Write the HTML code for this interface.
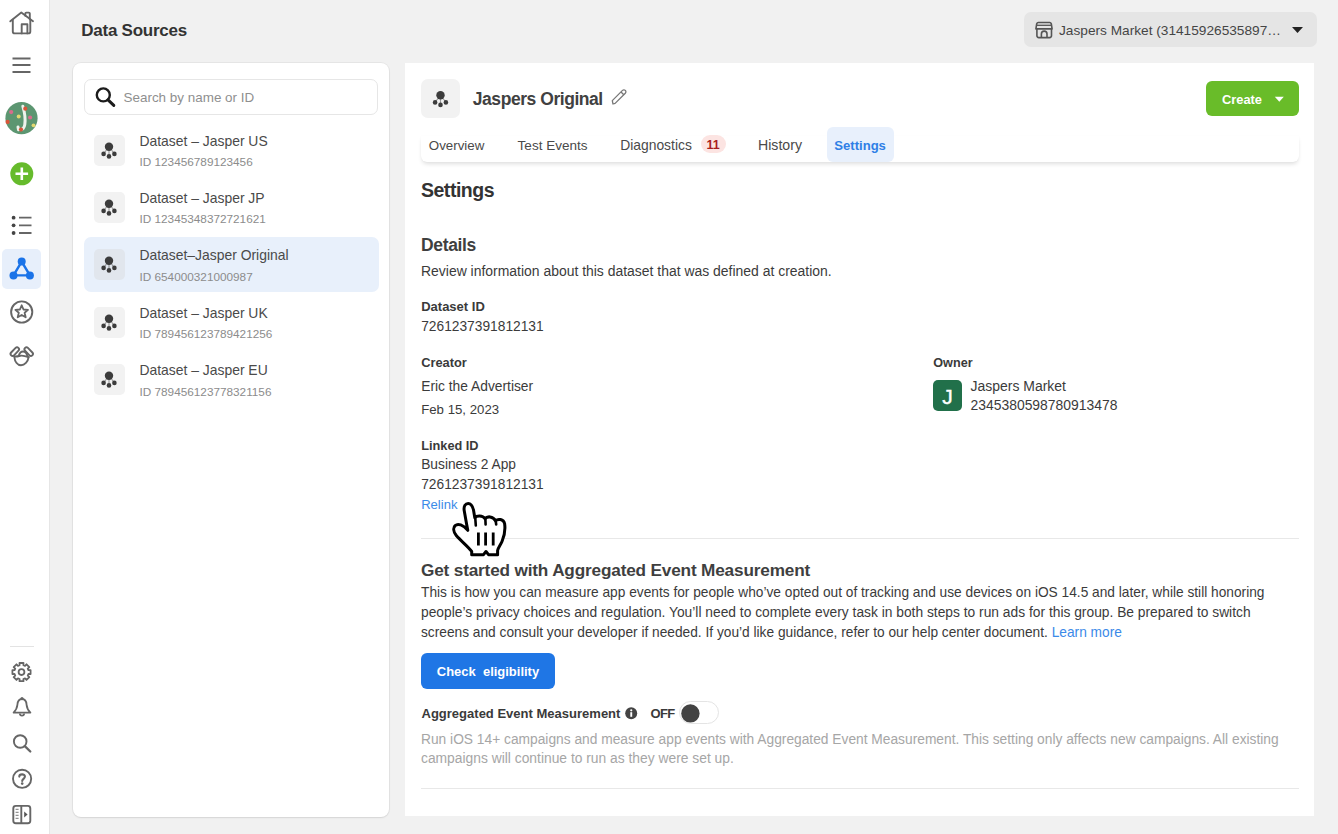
<!DOCTYPE html>
<html><head><meta charset="utf-8"><style>
html,body{margin:0;padding:0;}
body{width:1338px;height:834px;overflow:hidden;position:relative;background:#f1f1f1;font-family:"Liberation Sans",sans-serif;}
#w{position:absolute;left:0;top:0;width:1338px;height:834px;}
.t{position:absolute;white-space:pre;line-height:1;}
.r{position:absolute;}
svg.r{overflow:visible;}
</style></head><body><div id="w">
<div class="r" style="left:0px;top:0px;width:49.00px;height:834.00px;background:#fff;border-right:1px solid #e6e6e6;"></div>
<svg class="r" style="left:9px;top:11px" width="26" height="25" viewBox="0 0 26 25"><g fill="none" stroke="#666" stroke-width="1.9" stroke-linejoin="round" stroke-linecap="round"><path d="M1.3 10.3 L12.3 1.6 L24 10.3"/><path d="M3.8 8.6 V20.4 a2 2 0 0 0 2 2 H19.3 a2 2 0 0 0 2 -2 V8.6"/><path d="M12.7 22.4 V13.2 H18.4 V22.4"/><path d="M16.3 4.8 V2.6 a1 1 0 0 1 1 -1 H19.8 a1 1 0 0 1 1 1 V8.2"/></g></svg>
<svg class="r" style="left:12px;top:56px" width="20" height="18" viewBox="0 0 20 18"><g stroke="#666" stroke-width="2"><path d="M0.5 2.4H18.5M0.5 9.1H18.5M0.5 16H18.5"/></g></svg>
<svg class="r" style="left:5px;top:102px" width="33" height="33" viewBox="0 0 33 33"><circle cx="16.5" cy="16.2" r="16.1" fill="#5c9671"/><path d="M17.8 4.2 C19.5 10 20.5 18 19.8 22.5 C19.3 25.5 17.5 27.5 15.5 27.5 M13 25 L13.5 27.8" stroke="#eef2ec" stroke-width="3" fill="none" stroke-linecap="round"/><circle cx="20.3" cy="6.7" r="2.1" fill="#d9553a"/><circle cx="6.2" cy="10.1" r="2.1" fill="#d86c8c"/><circle cx="13.7" cy="14.6" r="2" fill="#e2d870"/><circle cx="25.1" cy="15.5" r="2.1" fill="#d86c8c"/><circle cx="2.6" cy="19.9" r="2.1" fill="#d9553a"/><circle cx="28.5" cy="23.3" r="1.9" fill="#e2d870"/><circle cx="16" cy="27.6" r="2.1" fill="#d9553a"/></svg>
<svg class="r" style="left:10px;top:162px" width="24" height="24" viewBox="0 0 24 24"><circle cx="11.8" cy="11.8" r="11.5" fill="#66bb2c"/><path d="M11.8 5.5V18.1M5.5 11.8H18.1" stroke="#fff" stroke-width="2.6"/></svg>
<svg class="r" style="left:11px;top:215px" width="22" height="21" viewBox="0 0 22 21"><g fill="#444"><circle cx="2.6" cy="2.7" r="1.9"/><circle cx="2.6" cy="10.3" r="1.9"/><circle cx="2.6" cy="18" r="1.9"/></g><g stroke="#666" stroke-width="1.8"><path d="M8 2.7H20.5M8 10.3H20.5M8 18H20.5"/></g></svg>
<div class="r" style="left:2px;top:249px;width:39.00px;height:39.50px;background:#e7effb;border-radius:5px;"></div>
<svg class="r" style="left:8px;top:256px" width="28" height="24" viewBox="0 0 28 24"><g stroke="#1a73e8" stroke-width="2.4" fill="none"><path d="M13.7 5.6 L5.5 19.4 H21.9 Z"/></g><g fill="#1a73e8"><circle cx="13.7" cy="5.6" r="4"/><circle cx="5.5" cy="19.4" r="4"/><circle cx="21.9" cy="19.4" r="4"/></g></svg>
<svg class="r" style="left:9px;top:299px" width="26" height="26" viewBox="0 0 26 26"><circle cx="12.7" cy="13" r="10.6" fill="none" stroke="#666" stroke-width="1.9"/><path d="M12.7 6.3 L14.5 10.5 L19 10.9 L15.6 13.8 L16.7 18.3 L12.7 15.9 L8.7 18.3 L9.8 13.8 L6.4 10.9 L10.9 10.5 Z" fill="none" stroke="#666" stroke-width="1.8" stroke-linejoin="round"/></svg>
<svg class="r" style="left:4px;top:338px" width="36" height="36" viewBox="0 0 36 36"><g fill="none" stroke="#666" stroke-width="1.9" stroke-linejoin="round" stroke-linecap="round"><rect x="-5.2" y="-2" width="10.4" height="4" rx="2" transform="translate(10.8 13.6) rotate(-46)"/><rect x="-5.2" y="-2" width="10.4" height="4" rx="2" transform="translate(24.7 13.6) rotate(46)"/><path d="M10.3 18.6 C10.8 23.8 13.6 27.2 17 27.2 C20.6 27.2 24 23.8 24.6 19.2"/><path d="M10.3 18.4 C12 18.6 13.5 18.5 15 18 C17 17.3 19.5 17.2 24.6 19.2"/><path d="M14.8 17.6 C15.6 14.9 17.3 13.5 19 13.5 C21 13.5 22.8 15.3 23.4 18.2"/></g></svg>
<div class="r" style="left:10px;top:645.5px;width:24.00px;height:1.30px;background:#e3e3e3;"></div>
<svg class="r" style="left:0px;top:650px" width="44" height="44" viewBox="0 0 44 44"><path d="M28.44 20.18 L30.58 20.11 L30.58 24.09 L28.44 24.02 L27.76 25.65 L29.33 27.11 L26.51 29.93 L25.05 28.36 L23.42 29.04 L23.49 31.18 L19.51 31.18 L19.58 29.04 L17.95 28.36 L16.49 29.93 L13.67 27.11 L15.24 25.65 L14.56 24.02 L12.42 24.09 L12.42 20.11 L14.56 20.18 L15.24 18.55 L13.67 17.09 L16.49 14.27 L17.95 15.84 L19.58 15.16 L19.51 13.02 L23.49 13.02 L23.42 15.16 L25.05 15.84 L26.51 14.27 L29.33 17.09 L27.76 18.55 Z" fill="none" stroke="#666" stroke-width="1.8" stroke-linejoin="round"/><circle cx="21.5" cy="22.1" r="2.9" fill="none" stroke="#666" stroke-width="1.8"/></svg>
<svg class="r" style="left:11px;top:695px" width="22" height="25" viewBox="0 0 22 25"><g fill="none" stroke="#666" stroke-width="1.8" stroke-linejoin="round"><path d="M11 4 C7.8 4 6.6 6.8 6.4 9.8 C6.1 13.3 5.2 15 2.6 17.6 H19.4 C16.8 15 15.9 13.3 15.6 9.8 C15.4 6.8 14.2 4 11 4 Z"/><path d="M8.8 18.5 C9 21.2 13 21.2 13.2 18.5"/></g><circle cx="11" cy="3.6" r="1.6" fill="#666"/></svg>
<svg class="r" style="left:11px;top:732px" width="23" height="23" viewBox="0 0 23 23"><g fill="none" stroke="#666" stroke-width="1.9"><circle cx="9.2" cy="9.5" r="6.3"/><path d="M13.8 14.2 L19.3 19.5" stroke-width="2.3" stroke-linecap="round"/></g></svg>
<svg class="r" style="left:10px;top:767px" width="24" height="25" viewBox="0 0 24 25"><circle cx="12.1" cy="11.8" r="9.1" fill="none" stroke="#666" stroke-width="1.9"/><path d="M9.3 9.6 C9.3 6.6 14.9 6.6 14.9 9.6 C14.9 11.8 12.2 11.9 12.2 14" fill="none" stroke="#666" stroke-width="2.1" stroke-linecap="round"/><circle cx="12.2" cy="16.6" r="1.3" fill="#666"/></svg>
<svg class="r" style="left:11px;top:803px" width="22" height="24" viewBox="0 0 22 24"><rect x="2.3" y="2.9" width="17" height="17.4" rx="2.5" fill="none" stroke="#666" stroke-width="1.9"/><path d="M10.3 2.9V20.3" stroke="#666" stroke-width="1.9"/><path d="M13.2 8.6 L16.6 11.6 L13.2 14.6Z" fill="#555"/><g stroke="#777" stroke-width="1"><path d="M4.6 6.3h3M4.6 9.3h3M4.6 12.3h3M4.6 15.3h3"/></g></svg>
<div class="t" style="left:81.3px;top:22.10px;font-size:17px;font-weight:700;color:#333;letter-spacing:-0.25px;">Data Sources</div>
<div class="r" style="left:1024.2px;top:11.8px;width:292.80px;height:34.80px;background:#e5e5e5;border-radius:7px;"></div>
<svg class="r" style="left:1034.5px;top:20.5px" width="19" height="19" viewBox="0 0 19 19"><g fill="none" stroke="#555" stroke-width="1.6" stroke-linejoin="round"><path d="M3.2 1.5 H14.8 C15.6 1.5 16 2 16.3 2.8 L17.1 7.9 H0.9 L1.7 2.8 C2 2 2.4 1.5 3.2 1.5 Z"/><path d="M1.6 4.3 H16.4" stroke-width="1.3"/><path d="M1.9 8 V14.6 a2 2 0 0 0 2 2 H14.5 a2 2 0 0 0 2 -2 V8"/><path d="M6.4 16.5 V12.9 a2.8 2.8 0 0 1 5.6 0 V16.5"/></g></svg>
<div class="t" style="left:1059px;top:24.01px;font-size:13.68px;font-weight:400;color:#454545;">Jaspers Market (31415926535897…</div>
<svg class="r" style="left:1291px;top:26px" width="13" height="8" viewBox="0 0 13 8"><path d="M1 1 H12 L6.5 7 Z" fill="#222"/></svg>
<div class="r" style="left:72.5px;top:62.8px;width:316.80px;height:753.80px;background:#fff;border-radius:8px;box-shadow:0 0 0 1px rgba(0,0,0,0.045),0 1px 2px rgba(0,0,0,0.08);"></div>
<div class="r" style="left:84.3px;top:78.8px;width:294.20px;height:36.00px;background:#fff;border:1.5px solid #e6e6e6;border-radius:7px;box-sizing:border-box;"></div>
<svg class="r" style="left:94px;top:86px" width="23" height="22" viewBox="0 0 23 22"><g fill="none" stroke="#1c1c1c"><circle cx="9.3" cy="8.9" r="6.5" stroke-width="2.4"/><path d="M14 13.8 L19.8 19.4" stroke-width="3" stroke-linecap="round"/></g></svg>
<div class="t" style="left:123.5px;top:90.61px;font-size:13.45px;font-weight:400;color:#8f8f8f;">Search by name or ID</div>
<div class="r" style="left:94.3px;top:134.5px;width:30.60px;height:31.00px;background:#f2f2f2;border-radius:5px;"></div>
<svg class="r" style="left:94.3px;top:134.5px" width="30" height="31" viewBox="0 0 30 31"><g fill="#3c3c3c"><circle cx="15" cy="11.8" r="4.2"/><circle cx="9.6" cy="18.9" r="2.3"/><circle cx="20.4" cy="18.9" r="2.3"/><circle cx="15" cy="21.4" r="2.3"/></g><path d="M12.5 15 L10.5 17.5 M15 15.5 V19.5 M17.5 15 L19.5 17.5" stroke="#3c3c3c" stroke-width="1.1" fill="none" opacity="0.5"/></svg>
<div class="t" style="left:139.5px;top:134.51px;font-size:13.9px;font-weight:400;color:#4a4a4a;">Dataset – Jasper US</div>
<div class="t" style="left:139.5px;top:156.01px;font-size:11.77px;font-weight:400;color:#8c8c8c;">ID 123456789123456</div>
<div class="r" style="left:94.3px;top:191.95px;width:30.60px;height:31.00px;background:#f2f2f2;border-radius:5px;"></div>
<svg class="r" style="left:94.3px;top:191.95px" width="30" height="31" viewBox="0 0 30 31"><g fill="#3c3c3c"><circle cx="15" cy="11.8" r="4.2"/><circle cx="9.6" cy="18.9" r="2.3"/><circle cx="20.4" cy="18.9" r="2.3"/><circle cx="15" cy="21.4" r="2.3"/></g><path d="M12.5 15 L10.5 17.5 M15 15.5 V19.5 M17.5 15 L19.5 17.5" stroke="#3c3c3c" stroke-width="1.1" fill="none" opacity="0.5"/></svg>
<div class="t" style="left:139.5px;top:191.96px;font-size:13.9px;font-weight:400;color:#4a4a4a;">Dataset – Jasper JP</div>
<div class="t" style="left:139.5px;top:213.46px;font-size:11.77px;font-weight:400;color:#8c8c8c;">ID 12345348372721621</div>
<div class="r" style="left:84.1px;top:237.2px;width:294.70px;height:55.00px;background:#e8f0fb;border-radius:7px;"></div>
<div class="r" style="left:94.3px;top:249.4px;width:30.60px;height:31.00px;background:#e1e6ed;border-radius:5px;"></div>
<svg class="r" style="left:94.3px;top:249.4px" width="30" height="31" viewBox="0 0 30 31"><g fill="#3c3c3c"><circle cx="15" cy="11.8" r="4.2"/><circle cx="9.6" cy="18.9" r="2.3"/><circle cx="20.4" cy="18.9" r="2.3"/><circle cx="15" cy="21.4" r="2.3"/></g><path d="M12.5 15 L10.5 17.5 M15 15.5 V19.5 M17.5 15 L19.5 17.5" stroke="#3c3c3c" stroke-width="1.1" fill="none" opacity="0.5"/></svg>
<div class="t" style="left:139.5px;top:249.41px;font-size:13.9px;font-weight:400;color:#4a4a4a;">Dataset–Jasper Original</div>
<div class="t" style="left:139.5px;top:270.90px;font-size:11.77px;font-weight:400;color:#8c8c8c;">ID 654000321000987</div>
<div class="r" style="left:94.3px;top:306.85px;width:30.60px;height:31.00px;background:#f2f2f2;border-radius:5px;"></div>
<svg class="r" style="left:94.3px;top:306.85px" width="30" height="31" viewBox="0 0 30 31"><g fill="#3c3c3c"><circle cx="15" cy="11.8" r="4.2"/><circle cx="9.6" cy="18.9" r="2.3"/><circle cx="20.4" cy="18.9" r="2.3"/><circle cx="15" cy="21.4" r="2.3"/></g><path d="M12.5 15 L10.5 17.5 M15 15.5 V19.5 M17.5 15 L19.5 17.5" stroke="#3c3c3c" stroke-width="1.1" fill="none" opacity="0.5"/></svg>
<div class="t" style="left:139.5px;top:306.85px;font-size:13.9px;font-weight:400;color:#4a4a4a;">Dataset – Jasper UK</div>
<div class="t" style="left:139.5px;top:328.36px;font-size:11.77px;font-weight:400;color:#8c8c8c;">ID 789456123789421256</div>
<div class="r" style="left:94.3px;top:364.3px;width:30.60px;height:31.00px;background:#f2f2f2;border-radius:5px;"></div>
<svg class="r" style="left:94.3px;top:364.3px" width="30" height="31" viewBox="0 0 30 31"><g fill="#3c3c3c"><circle cx="15" cy="11.8" r="4.2"/><circle cx="9.6" cy="18.9" r="2.3"/><circle cx="20.4" cy="18.9" r="2.3"/><circle cx="15" cy="21.4" r="2.3"/></g><path d="M12.5 15 L10.5 17.5 M15 15.5 V19.5 M17.5 15 L19.5 17.5" stroke="#3c3c3c" stroke-width="1.1" fill="none" opacity="0.5"/></svg>
<div class="t" style="left:139.5px;top:364.31px;font-size:13.9px;font-weight:400;color:#4a4a4a;">Dataset – Jasper EU</div>
<div class="t" style="left:139.5px;top:385.81px;font-size:11.77px;font-weight:400;color:#8c8c8c;">ID 789456123778321156</div>
<div class="r" style="left:404.8px;top:63px;width:909.40px;height:753.30px;background:#fff;"></div>
<div class="r" style="left:421px;top:79px;width:39.00px;height:39.00px;background:#f2f2f2;border-radius:7px;"></div>
<svg class="r" style="left:421px;top:79px" width="39" height="39" viewBox="0 0 39 39"><g transform="translate(4.5,4.5)"><g fill="#3c3c3c"><circle cx="15" cy="11.8" r="4.2"/><circle cx="9.6" cy="18.9" r="2.3"/><circle cx="20.4" cy="18.9" r="2.3"/><circle cx="15" cy="21.4" r="2.3"/></g><path d="M12.5 15 L10.5 17.5 M15 15.5 V19.5 M17.5 15 L19.5 17.5" stroke="#3c3c3c" stroke-width="1.1" fill="none" opacity="0.5"/></g></svg>
<div class="t" style="left:472.8px;top:90.81px;font-size:17.5px;font-weight:700;color:#414141;letter-spacing:-0.45px;">Jaspers Original</div>
<svg class="r" style="left:609px;top:87px" width="20" height="20" viewBox="0 0 20 20"><g fill="none" stroke="#777" stroke-width="1.3" stroke-linejoin="round"><path d="M4 17 L3.3 13.6 L13.5 3.4 C14.3 2.6 15.5 2.6 16.3 3.4 C17.1 4.2 17.1 5.4 16.3 6.2 L6.1 16.4 Z"/><path d="M12 5 L14.8 7.8"/></g></svg>
<div class="r" style="left:1205.5px;top:80.7px;width:93.10px;height:35.80px;background:#69bc29;border-radius:6px;"></div>
<div class="t" style="left:1222px;top:93.51px;font-size:12.85px;font-weight:700;color:#fff;">Create</div>
<svg class="r" style="left:1273.5px;top:95.5px" width="11" height="7" viewBox="0 0 11 7"><path d="M0.8 0.8 H9.8 L5.3 5.8 Z" fill="#fff"/></svg>
<div class="r" style="left:420.5px;top:136px;width:878.50px;height:25.50px;background:#fff;box-shadow:0 3px 4px -1px rgba(0,0,0,0.13),0 0 1px rgba(0,0,0,0.05);border-radius:0 0 6px 6px;"></div>
<div class="t" style="left:428.8px;top:138.50px;font-size:13.34px;font-weight:400;color:#4a4a4a;">Overview</div>
<div class="t" style="left:517.6px;top:138.51px;font-size:13.54px;font-weight:400;color:#4a4a4a;">Test Events</div>
<div class="t" style="left:620.2px;top:138.51px;font-size:13.87px;font-weight:400;color:#4a4a4a;">Diagnostics</div>
<div class="r" style="left:700.9px;top:135.2px;width:25.30px;height:17.90px;background:#fce4e2;border-radius:9px;"></div>
<div class="t" style="left:706.5px;top:139.31px;font-size:12.5px;font-weight:700;color:#a81d22;">11</div>
<div class="t" style="left:758px;top:137.51px;font-size:14.14px;font-weight:400;color:#4a4a4a;">History</div>
<div class="r" style="left:826.5px;top:126.7px;width:67.70px;height:35.30px;background:#e8f0fc;border-radius:6px;"></div>
<div class="t" style="left:834.3px;top:138.51px;font-size:13.08px;font-weight:700;color:#2f7fe6;">Settings</div>
<div class="t" style="left:421px;top:181.41px;font-size:19.5px;font-weight:700;color:#333;letter-spacing:-0.49px;">Settings</div>
<div class="t" style="left:421px;top:237.31px;font-size:17.5px;font-weight:700;color:#3f3f3f;letter-spacing:-0.34px;">Details</div>
<div class="t" style="left:421px;top:264.81px;font-size:13.94px;font-weight:400;color:#3b3b3b;">Review information about this dataset that was defined at creation.</div>
<div class="t" style="left:421.2px;top:300.41px;font-size:13.0px;font-weight:700;color:#3a3a3a;">Dataset ID</div>
<div class="t" style="left:421.2px;top:320.31px;font-size:13.77px;font-weight:400;color:#3b3b3b;">7261237391812131</div>
<div class="t" style="left:421.2px;top:356.70px;font-size:12.85px;font-weight:700;color:#3a3a3a;">Creator</div>
<div class="t" style="left:421.2px;top:380.20px;font-size:13.8px;font-weight:400;color:#3b3b3b;">Eric the Advertiser</div>
<div class="t" style="left:421.2px;top:402.90px;font-size:13.23px;font-weight:400;color:#3b3b3b;">Feb 15, 2023</div>
<div class="t" style="left:421.2px;top:439.50px;font-size:12.75px;font-weight:700;color:#3a3a3a;">Linked ID</div>
<div class="t" style="left:421.2px;top:458.41px;font-size:13.75px;font-weight:400;color:#3b3b3b;">Business 2 App</div>
<div class="t" style="left:421.2px;top:478.21px;font-size:13.77px;font-weight:400;color:#3b3b3b;">7261237391812131</div>
<div class="t" style="left:421.2px;top:497.90px;font-size:13.06px;font-weight:400;color:#3b8ae8;">Relink</div>
<div class="t" style="left:933.3px;top:356.51px;font-size:12.63px;font-weight:700;color:#3a3a3a;">Owner</div>
<div class="r" style="left:933px;top:379.5px;width:29.40px;height:31.70px;background:#21704a;border-radius:5px;"></div>
<div class="t" style="left:942.3px;top:386.21px;font-size:21px;font-weight:400;color:#fff;-webkit-text-stroke:0.4px #fff;">J</div>
<div class="t" style="left:970.5px;top:379.81px;font-size:13.97px;font-weight:400;color:#3b3b3b;">Jaspers Market</div>
<div class="t" style="left:970.5px;top:399.11px;font-size:13.91px;font-weight:400;color:#3b3b3b;">2345380598780913478</div>
<div class="r" style="left:421px;top:537.5px;width:878.00px;height:1.30px;background:#e8e8e8;"></div>
<div class="t" style="left:421px;top:562.31px;font-size:17.2px;font-weight:700;color:#3f3f3f;letter-spacing:-0.17px;">Get started with Aggregated Event Measurement</div>
<div class="t" style="left:421px;top:586.21px;font-size:13.73px;font-weight:400;color:#3b3b3b;">This is how you can measure app events for people who’ve opted out of tracking and use devices on iOS 14.5 and later, while still honoring</div>
<div class="t" style="left:421px;top:606.11px;font-size:13.8px;font-weight:400;color:#3b3b3b;">people’s privacy choices and regulation. You’ll need to complete every task in both steps to run ads for this group. Be prepared to switch</div>
<div class="t" style="left:421px;top:626.01px;font-size:13.72px;font-weight:400;color:#3b3b3b;">screens and consult your developer if needed. If you’d like guidance, refer to our help center document. <span style="color:#3b8ae8">Learn more</span></div>
<div class="r" style="left:420.8px;top:653.4px;width:134.40px;height:35.80px;background:#1f76e5;border-radius:6px;"></div>
<div class="t" style="left:436.8px;top:665.31px;font-size:12.98px;font-weight:700;color:#fff;">Check&nbsp; eligibility</div>
<div class="t" style="left:421.5px;top:706.91px;font-size:13.02px;font-weight:700;color:#3a3a3a;">Aggregated Event Measurement</div>
<svg class="r" style="left:625px;top:707px" width="12.5" height="12.5" viewBox="0 0 12.5 12.5"><circle cx="6.2" cy="6.2" r="6" fill="#444"/><rect x="5.3" y="5.2" width="1.9" height="4.6" fill="#fff"/><circle cx="6.25" cy="3.3" r="1.1" fill="#fff"/></svg>
<div class="t" style="left:650.4px;top:707.22px;font-size:13px;font-weight:700;color:#3a3a3a;letter-spacing:-0.6px;">OFF</div>
<div class="r" style="left:679px;top:701.2px;width:39.50px;height:23.00px;background:#fff;border:1px solid #e4e4e4;border-radius:12px;box-sizing:border-box;"></div>
<svg class="r" style="left:681.3px;top:703.6px" width="19" height="19" viewBox="0 0 19 19"><circle cx="9.4" cy="9.4" r="9.2" fill="#434343"/></svg>
<div class="t" style="left:421px;top:732.82px;font-size:13.78px;font-weight:400;color:#a6a6a6;">Run iOS 14+ campaigns and measure app events with Aggregated Event Measurement. This setting only affects new campaigns. All existing</div>
<div class="t" style="left:421px;top:752.41px;font-size:13.83px;font-weight:400;color:#a6a6a6;">campaigns will continue to run as they were set up.</div>
<div class="r" style="left:421px;top:787.5px;width:878.00px;height:1.30px;background:#e8e8e8;"></div>
<svg class="r" style="left:449px;top:500px" width="60" height="60" viewBox="0 0 60 60"><path d="M18.8 30.3 C17.5 24 16 15 15.2 10.5 C14.5 6 16.5 3.5 19.2 3.5 C22 3.5 23.5 6 24.5 10 L25.8 17.8 C27.5 15.5 33.5 15 36.2 18.8 C38 16 44 16 46.5 20.7 C49 18.5 54.5 19 55.6 23.5 C56.5 30 55 37 53 41.5 C51.5 45 49.5 47 48.6 50.5 V54.7 H39.5 L37 51.5 L34.5 54.7 H22.7 V51.4 C19 46.5 12 41 7.3 35.5 C4.2 31.5 4 27.5 6.3 25.5 C9 23 14 25 18.8 30.3 Z" fill="#fff" stroke="#000" stroke-width="3" stroke-linejoin="round"/><path d="M26.3 18.5 L26.8 25.5 M36.4 19.5 L36.6 24.5 M46.8 21.5 L47.2 24.5" stroke="#000" stroke-width="2.6" fill="none" stroke-linecap="round"/><path d="M29.4 32.5 V45.5 M36.6 32.5 V45.5 M44.2 32.5 V45.5" stroke="#000" stroke-width="2.8"/></svg>
</div></body></html>
